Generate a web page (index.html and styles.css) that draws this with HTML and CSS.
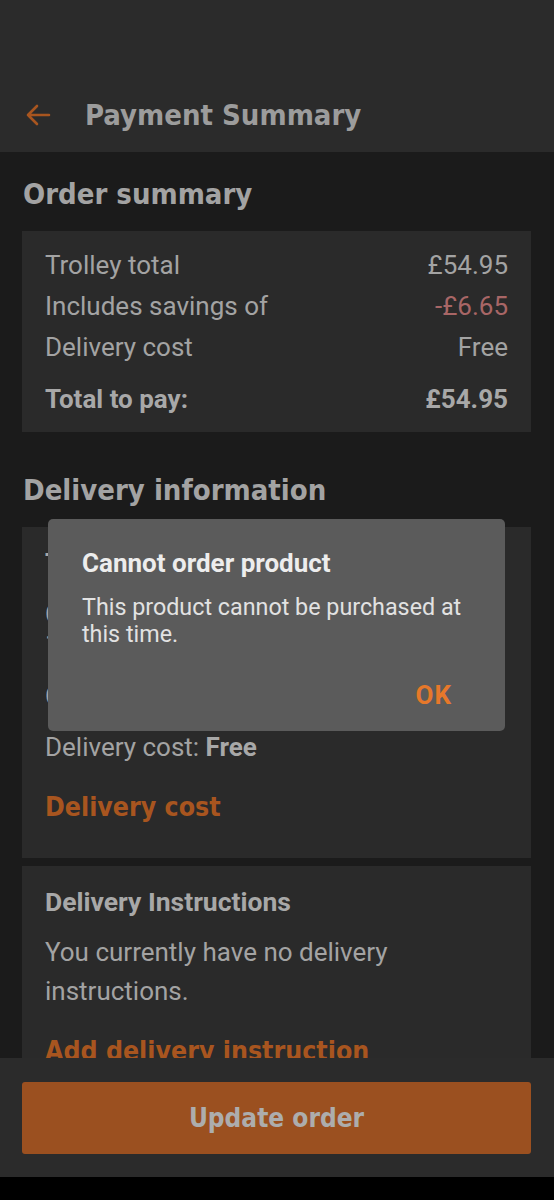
FILE: index.html
```html
<!DOCTYPE html>
<html lang="en">
<head>
    <meta charset="UTF-8">
    <meta name="viewport" content="width=device-width, initial-scale=1.0">
    <title>Payment Summary</title>
    <link rel="stylesheet" href="styles.css">
</head>
<body>
<div class="screen">
    <header class="app-bar">
        <svg class="back" width="26" height="22" viewBox="0 0 26 22">
            <path d="M24 11H3M12 2L3 11l9 9" fill="none" stroke="#a8551f" stroke-width="2.6" stroke-linecap="round" stroke-linejoin="round"/>
        </svg>
        <h1>Payment Summary</h1>
    </header>

    <main class="scroll">
        <h2 class="first">Order summary</h2>
        <div class="card summary">
            <div class="row"><span>Trolley total</span><span>£54.95</span></div>
            <div class="row"><span>Includes savings of</span><span class="saving">-£6.65</span></div>
            <div class="row"><span>Delivery cost</span><span>Free</span></div>
            <div class="row total"><span>Total to pay:</span><span>£54.95</span></div>
        </div>

        <h2>Delivery information</h2>
        <div class="card delivery">
            <h4>Thursday 14 March</h4>
            <p class="slot">Collection slot<br>10:00 - 11:00</p>
            <p class="slot">Change address</p>
            <p class="cost">Delivery cost: <strong>Free</strong></p>
            <a class="link">Delivery cost</a>
        </div>

        <div class="card instructions">
            <h4>Delivery Instructions</h4>
            <p>You currently have no delivery instructions.</p>
            <a class="link">Add delivery instruction</a>
        </div>
    </main>

    <footer class="bottom-bar">
        <button class="primary">Update order</button>
    </footer>
    <div class="nav-bar"></div>

    <div class="dialog">
        <h3>Cannot order product</h3>
        <p>This product cannot be purchased at this time.</p>
        <div class="actions"><span class="ok">OK</span></div>
    </div>
</div>
</body>
</html>
```

FILE: styles.css
```css
body {
    margin: 0;
    background: #000;
    font-family: Roboto, 'Noto Sans', sans-serif;
    color: #a3a3a3;
}
.screen {
    position: relative;
    width: 554px;
    height: 1200px;
    display: flex;
    flex-direction: column;
    background: #1b1b1b;
    overflow: hidden;
}
.app-bar {
    height: 152px;
    box-sizing: border-box;
    padding: 78px 0 0 25px;
    background: #2b2b2b;
    display: flex;
    align-items: center;
    gap: 34px;
    flex-shrink: 0;
}
.app-bar h1, h2, .link, .primary {
    font-family: 'DejaVu Sans', sans-serif;
    font-stretch: condensed;
    font-weight: bold;
}
.app-bar h1 {
    margin: 0;
    font-size: 29px;
    color: #9c9c9c;
}
.scroll {
    flex: 1;
    overflow: hidden;
    padding: 0 23px 0 22px;
}
h2 {
    margin: 40px 1px 19px;
    font-size: 29px;
    line-height: 36px;
    color: #a3a3a3;
}
h2.first { margin-top: 24px; }
.card {
    background: #2a2a2a;
    padding: 0 23px;
}
.summary { padding-top: 14px; padding-bottom: 12px; font-size: 26px; }
.row {
    display: flex;
    justify-content: space-between;
    line-height: 41px;
}
.row.total { margin-top: 11px; font-weight: bold; color: #a8a8a8; }
.saving { color: #a86666; }
.card h4 {
    margin: 0;
    font-size: 26.5px;
    font-weight: bold;
    color: #a8a8a8;
}
.card p { margin: 0; font-size: 26px; }
.delivery { height: 331px; box-sizing: border-box; padding-top: 20px; }
.delivery h4 { line-height: 30px; }
.delivery .slot { line-height: 30px; margin-top: 22px; }
.delivery .cost { margin-top: 18px; line-height: 36px; }
.cost strong { color: #a8a8a8; }
.link {
    display: block;
    font-size: 26.5px;
    color: #a8551f;
}
.delivery .link { margin-top: 24px; line-height: 36px; }
.instructions { margin-top: 8px; padding-top: 20px; padding-bottom: 30px; }
.instructions h4 { line-height: 32px; }
.instructions p { margin-top: 15px; line-height: 39px; width: 400px; }
.instructions .link { margin-top: 22px; line-height: 36px; }
.bottom-bar {
    height: 119px;
    flex-shrink: 0;
    box-sizing: border-box;
    padding: 24px 23px 0 22px;
    background: #2b2b2b;
}
.primary {
    width: 100%;
    height: 72px;
    border: 0;
    border-radius: 3px;
    background: #9b5020;
    font-size: 26px;
    color: #adadad;
}
.nav-bar { height: 23px; flex-shrink: 0; background: #000; }
.dialog {
    position: absolute;
    left: 48px;
    top: 519px;
    width: 457px;
    height: 212px;
    box-sizing: border-box;
    padding: 29px 34px 0;
    background: #5b5b5b;
    border-radius: 5px;
}
.dialog h3 {
    margin: 0;
    font-size: 26px;
    line-height: 30px;
    font-weight: bold;
    color: #ededed;
}
.dialog p {
    margin: 16px 0 0;
    font-size: 23.3px;
    line-height: 27px;
    color: #e2e2e2;
}
.actions { display: flex; justify-content: flex-end; margin-top: 29px; padding-right: 19px; }
.ok { font-size: 26px; font-weight: bold; letter-spacing: 1px; color: #e6782a; line-height: 36px; }
```
